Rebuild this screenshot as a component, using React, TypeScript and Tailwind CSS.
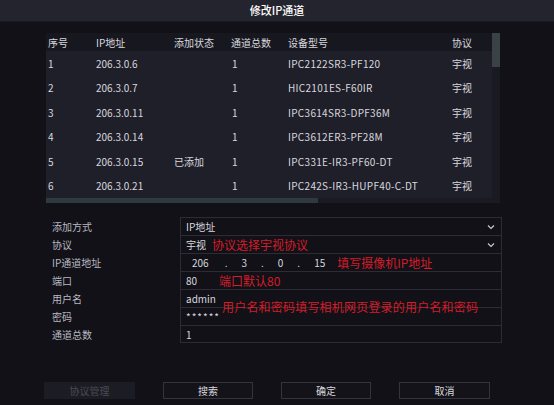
import React from 'react';

const font = { fontFamily: '"Noto Sans CJK SC", "Noto Sans", sans-serif' };

const rows = [
    ['1', '206.3.0.6', '', '1', 'IPC2122SR3-PF120', '宇视'],
    ['2', '206.3.0.7', '', '1', 'HIC2101ES-F60IR', '宇视'],
    ['3', '206.3.0.11', '', '1', 'IPC3614SR3-DPF36M', '宇视'],
    ['4', '206.3.0.14', '', '1', 'IPC3612ER3-PF28M', '宇视'],
    ['5', '206.3.0.15', '已添加', '1', 'IPC331E-IR3-PF60-DT', '宇视'],
    ['6', '206.3.0.21', '', '1', 'IPC242S-IR3-HUPF40-C-DT', '宇视'],
];

const Chevron = () => (
    <svg width="8" height="6" viewBox="0 0 8 6" className="ml-auto mr-[6px]">
        <path d="M1 1.5 L4 4.5 L7 1.5" stroke="#c8c8d0" strokeWidth="1.2" fill="none" />
    </svg>
);

const Field: React.FC<{ children?: React.ReactNode; last?: boolean }> = ({ children, last }) => (
    <div className={`flex items-center h-[18px] pl-[5px] border-x border-t border-[#2c2c36] ${last ? 'border-b' : ''}`}>
        {children}
    </div>
);

const Note: React.FC<{ children: React.ReactNode; className?: string }> = ({ children, className }) => (
    <span className={`text-[12px] text-[#d41c2a] leading-none ${className ?? ''}`}>{children}</span>
);

export default function App() {
    return (
        <div className="w-[554px] h-[405px] bg-[#111117] text-[#d8d8de] text-[10px] overflow-hidden" style={font}>
            {/* Title */}
            <div className="h-[22px] bg-[#24242e] flex items-center justify-center text-[11px] font-medium text-white border-b border-[#1a1a22]">
                修改IP通道
            </div>

            {/* Table */}
            <div className="mt-[11px] ml-[46px] w-[454px] flex">
                <div className="w-[446px] bg-[#1f1f2a]">
                    <div className="flex h-[18px] items-center bg-[#17171f]">
                        <div className="w-[50px] pl-[2px]">序号</div>
                        <div className="w-[78px]">IP地址</div>
                        <div className="w-[57px]">添加状态</div>
                        <div className="w-[57px]">通道总数</div>
                        <div className="w-[164px]">设备型号</div>
                        <div>协议</div>
                    </div>
                    {rows.map((r) => (
                        <div key={r[0]} className="flex h-[24.5px] items-center">
                            <div className="w-[50px] pl-[2px]">{r[0]}</div>
                            <div className="w-[78px]">{r[1]}</div>
                            <div className="w-[57px]">{r[2]}</div>
                            <div className="w-[57px] pl-[1px]">{r[3]}</div>
                            <div className="w-[164px] tracking-[0.3px]">{r[4]}</div>
                            <div>{r[5]}</div>
                        </div>
                    ))}
                    <div className="h-[5px] bg-[#1a1a22]">
                        <div className="h-full w-[272px] bg-[#2f3a40]" />
                    </div>
                </div>
                <div className="w-[8px] bg-[#1a1a22]">
                    <div className="h-[34px] bg-[#3a4248]" />
                </div>
            </div>

            {/* Form */}
            <div className="mt-[14px] ml-[52px] flex">
                <div className="w-[128px] flex flex-col text-[#b8b8c0]">
                    {['添加方式', '协议', 'IP通道地址', '端口', '用户名', '密码', '通道总数'].map((l) => (
                        <div key={l} className="h-[18px] flex items-center">{l}</div>
                    ))}
                </div>
                <div className="w-[322px] flex flex-col">
                    <Field>
                        IP地址
                        <Chevron />
                    </Field>
                    <Field>
                        宇视
                        <Note className="ml-[6px]">协议选择宇视协议</Note>
                        <Chevron />
                    </Field>
                    <Field>
                        <span className="ml-[6px]">206</span>
                        <span className="ml-[16px]">.</span>
                        <span className="ml-[14px]">3</span>
                        <span className="ml-[14px]">.</span>
                        <span className="ml-[14px]">0</span>
                        <span className="ml-[14px]">.</span>
                        <span className="ml-[14px]">15</span>
                        <Note className="ml-[12px]">填写摄像机IP地址</Note>
                    </Field>
                    <Field>
                        80
                        <Note className="ml-[22px]">端口默认80</Note>
                    </Field>
                    <div className="relative">
                        <Field>admin</Field>
                        <Field>
                            <span className="tracking-[1px]">******</span>
                        </Field>
                        <Note className="absolute left-[42px] top-[12px] tracking-[0.2px]">用户名和密码填写相机网页登录的用户名和密码</Note>
                    </div>
                    <Field last>1</Field>
                </div>
            </div>

            {/* Buttons */}
            <div className="mt-[39px] ml-[44px] flex gap-[28px] text-[10px]">
                <div className="w-[91px] h-[17px] flex items-center justify-center bg-[#1c1c24] text-[#4a4a54]">协议管理</div>
                <div className="w-[90px] h-[17px] flex items-center justify-center border border-[#34343e] bg-[#131319]">搜索</div>
                <div className="w-[90px] h-[17px] flex items-center justify-center border border-[#34343e] bg-[#131319]">确定</div>
                <div className="w-[91px] h-[17px] flex items-center justify-center border border-[#34343e] bg-[#131319]">取消</div>
            </div>
        </div>
    );
}
